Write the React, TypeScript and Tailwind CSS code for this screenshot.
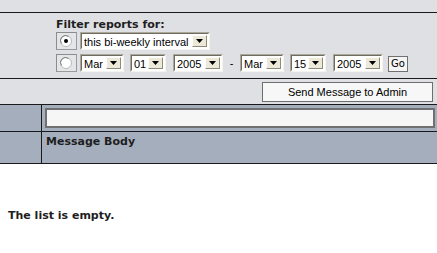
import React from "react";

const bold = "font-['DejaVu_Sans',Verdana,sans-serif] font-bold text-[11px] leading-[13px] text-[#1e1e1e]";
const sans = "font-['Liberation_Sans',Arial,sans-serif] text-[11px] leading-[14px] text-black";

function Arrow() {
  return (
    <div className="flex h-full w-[15px] shrink-0 items-center justify-center border border-t-[#fffefb] border-l-[#fffefb] border-b-[#8f8b7c] border-r-[#8f8b7c] bg-[#ece9d8]">
      <svg width="7" height="4" viewBox="0 0 7 4">
        <path d="M0 0h7L3.5 4z" fill="#000" />
      </svg>
    </div>
  );
}

function Sel({ className, text }: { className: string; text: string }) {
  return (
    <div className={"flex h-[18px] shrink-0 border border-t-[#aca899] border-l-[#aca899] border-b-[#f4f3ee] border-r-[#f4f3ee] " + className}>
      <div className="flex flex-1 items-stretch border border-t-[#6e6c62] border-l-[#6e6c62] border-b-[#ffffff] border-r-[#ffffff] bg-white p-px">
        <span className={"flex-1 pl-[1px] whitespace-nowrap " + sans}>{text}</span>
        <Arrow />
      </div>
    </div>
  );
}

function Radio({ checked }: { checked?: boolean }) {
  return (
    <div className="flex h-[18px] w-[21px] shrink-0 items-center border border-t-[#8c8c8c] border-l-[#8c8c8c] border-b-[#9a9a9a] border-r-[#9a9a9a] bg-[#e4e5e8] pl-[3px]">
      <svg width="12" height="12" viewBox="0 0 12 12">
        <circle cx="6" cy="6" r="5.5" fill="#fff" stroke="#b8b8b8" />
        <path d="M1.5 8.5A5 5 0 0 1 8.5 1.5" fill="none" stroke="#808080" strokeWidth="1" />
        {checked && <circle cx="6" cy="6" r="2" fill="#000" />}
      </svg>
    </div>
  );
}

function Line() {
  return <div className="h-px w-full bg-[#1a1a1a]" />;
}

export default function App() {
  return (
    <div className="flex h-[253px] w-[437px] flex-col overflow-hidden bg-white">
      <div className="h-[12px] bg-[#dfe0e3]" />
      <Line />
      <div className="flex h-[65px] flex-col bg-[#dfe0e3] pl-[56px] pt-[5px]">
        <div className={bold}>Filter reports for:</div>
        <div className="mt-[1px] flex items-center gap-[3px]">
          <Radio checked />
          <Sel className="w-[130px]" text="this bi-weekly interval" />
        </div>
        <div className="mt-[4px] flex items-center">
          <Radio />
          <Sel className="ml-[3px] w-[44px]" text="Mar" />
          <Sel className="ml-[6px] w-[36px]" text="01" />
          <Sel className="ml-[7px] w-[50px]" text="2005" />
          <span className={"w-[17px] text-center " + sans}>-</span>
          <Sel className="w-[44px]" text="Mar" />
          <Sel className="ml-[6px] w-[36px]" text="15" />
          <Sel className="ml-[7px] w-[50px]" text="2005" />
          <button className="ml-[5px] mt-[2px] flex h-[16px] w-[20px] items-center justify-center border border-[#707070] bg-[#f4f4f4] font-['DejaVu_Sans',Verdana,sans-serif] text-[10px] leading-[12px] text-black">
            Go
          </button>
        </div>
      </div>
      <Line />
      <div className="flex h-[25px] items-start justify-end bg-[#dfe0e3] pr-[4px] pt-[3px]">
        <button className={"flex h-[20px] w-[171px] items-center justify-center border border-[#6e6e6e] bg-[#f7f7f7] " + sans}>
          Send Message to Admin
        </button>
      </div>
      <Line />
      <div className="flex h-[26px] bg-[#a5aebd]">
        <div className="w-[41px] shrink-0" />
        <div className="w-px bg-[#1a1a1a]" />
        <div className="flex flex-1 pl-[3px] pr-[2px] pt-[3px]">
          <div className="h-[20px] flex-1 border-2 border-[#707070] bg-[#f6f6f6]" />
        </div>
      </div>
      <Line />
      <div className="flex h-[31px] bg-[#a5aebd]">
        <div className="w-[41px] shrink-0" />
        <div className="w-px bg-[#1a1a1a]" />
        <div className={"pl-[4px] pt-[3px] " + bold}>Message Body</div>
      </div>
      <Line />
      <div className={"pl-[8px] pt-[45px] " + bold}>The list is empty.</div>
    </div>
  );
}
